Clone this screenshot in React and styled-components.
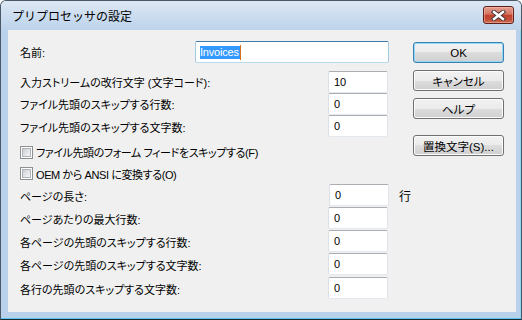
import React from "react";
import styled, { createGlobalStyle } from "styled-components";

const Global = createGlobalStyle`
  html, body {
    margin: 0;
    padding: 0;
    background: #ffffff;
  }
  body {
    font-family: "Liberation Sans", "Noto Sans CJK JP", sans-serif;
    font-size: 12px;
    color: #000;
  }
`;

const Window = styled.div`
  width: 522px;
  height: 320px;
  box-sizing: border-box;
  border: 1px solid #4b5866;
  border-bottom-color: #1e2a33;
  border-radius: 6px 6px 0 0;
  background: #b9d1ea;
  box-shadow: inset 0 -1px 0 #58c6ea, inset -1px 0 0 #8fd3ee;
  display: flex;
  flex-direction: column;
  overflow: hidden;
`;

const TitleBar = styled.div`
  height: 29px;
  flex: none;
  display: flex;
  align-items: center;
  justify-content: space-between;
  padding: 0 7px 0 11px;
  background: linear-gradient(#dde8f4, #c6d9ee 70%, #bcd3eb);
`;

const Title = styled.div`
  font-family: "Noto Sans CJK JP", sans-serif;
  font-size: 12px;
  color: #000;
  margin-top: -1px;
`;

const CloseButton = styled.div`
  width: 31px;
  height: 18px;
  box-sizing: border-box;
  border: 1px solid #5e2119;
  border-radius: 3px;
  margin-top: -1px;
  background: linear-gradient(#e4a192 0%, #d67361 45%, #c0412a 52%, #c4503a 80%, #cf705b 100%);
  box-shadow: inset 0 0 0 1px rgba(255, 200, 190, 0.45);
  display: flex;
  align-items: center;
  justify-content: center;
`;

const Frame = styled.div`
  flex: 1;
  display: flex;
  padding: 0 5px 7px 7px;
`;

const Client = styled.div`
  flex: 1;
  background: #f0f0f0;
  display: flex;
  padding: 11px 12px 0 12px;
`;

const Form = styled.div`
  width: 369px;
  display: flex;
  flex-direction: column;
`;

const Group = styled.div`
  display: flex;
  flex-direction: column;
  margin-top: ${({ top }) => top || 0}px;
`;

const Row = styled.div`
  height: ${({ h }) => h || 22}px;
  display: flex;
  align-items: ${({ top }) => (top ? "flex-start" : "center")};
`;

const Label = styled.div`
  flex: 1;
  font-family: "Liberation Sans", "Noto Sans CJK JP", sans-serif;
  font-feature-settings: "palt";
  font-size: 11px;
  white-space: nowrap;
  align-self: center;
`;

const TextBox = styled.div`
  width: ${({ w }) => w}px;
  height: 22px;
  box-sizing: border-box;
  background: #fff;
  border: 1px solid;
  border-color: ${({ focused }) =>
    focused ? "#3d7bad #a4c9e3 #b7d9ed #a4c9e3" : "#abadb3 #e2e3ea #e3e9ef #dbdfe6"};
  border-radius: 2px;
  margin-right: ${({ mr }) => mr || 0}px;
  padding-left: ${({ pl }) => pl || 5}px;
  display: flex;
  align-items: center;
  font-family: "Liberation Sans", sans-serif;
  font-size: 11px;
  letter-spacing: -0.2px;
  flex: none;
`;

const Selected = styled.span`
  background: #3399ff;
  color: #fff;
  line-height: 13px;
  padding: 0 1px 0 0;
`;

const Caret = styled.span`
  width: 1px;
  height: 15px;
  background: #d9701e;
`;

const Unit = styled.div`
  width: 0;
  text-indent: 10px;
  white-space: nowrap;
  font-family: "Noto Sans CJK JP", sans-serif;
  font-size: 12px;
  align-self: center;
`;

const CheckLabel = styled.label`
  display: flex;
  align-items: center;
  gap: 3px;
  font-family: "Liberation Sans", "Noto Sans CJK JP", sans-serif;
  font-feature-settings: "palt";
  font-size: 11px;
  letter-spacing: -0.4px;
  white-space: nowrap;
`;

const Box = styled.span`
  width: 13px;
  height: 13px;
  box-sizing: border-box;
  border: 1px solid #8e8f8f;
  background: #fff;
  padding: 1px;
  display: flex;
  flex: none;
  &::after {
    content: "";
    flex: 1;
    border: 1px solid #aeb3b9;
    background: linear-gradient(135deg, #cbcfd5, #f6f6f6);
  }
`;

const Buttons = styled.div`
  width: 91px;
  margin-left: auto;
  display: flex;
  flex-direction: column;
  padding-top: 1px;
`;

const Button = styled.div`
  height: 21px;
  box-sizing: border-box;
  margin-top: ${({ top }) => top || 0}px;
  border: 1px solid ${({ primary }) => (primary ? "#3c7fb1" : "#707070")};
  border-radius: 3px;
  background: linear-gradient(#f2f2f2 0%, #ebebeb 50%, #dddddd 50%, #cfcfcf 100%);
  box-shadow: inset 0 0 0 1px ${({ primary }) => (primary ? "#8fd8f5" : "#fcfcfc")};
  display: flex;
  align-items: center;
  justify-content: center;
  font-family: "Liberation Sans", "Noto Sans CJK JP", sans-serif;
  font-feature-settings: "palt";
  font-size: 11.5px;
  white-space: nowrap;
`;

const topFields = [
  ["入力ストリームの改行文字 (文字コード):", "10"],
  ["ファイル先頭のスキップする行数:", "0"],
  ["ファイル先頭のスキップする文字数:", "0"],
];

const pageFields = [
  ["ページの長さ:", "0", "行"],
  ["ページあたりの最大行数:", "0"],
  ["各ページの先頭のスキップする行数:", "0"],
  ["各ページの先頭のスキップする文字数:", "0"],
  ["各行の先頭のスキップする文字数:", "0"],
];

const CloseIcon = () => (
  <svg width="15" height="11" viewBox="0 0 15 11">
    <path d="M3 2 L12 9 M12 2 L3 9" stroke="#4a3a38" strokeWidth="4.4" strokeLinecap="square" />
    <path d="M3 2 L12 9 M12 2 L3 9" stroke="#ffffff" strokeWidth="2.4" strokeLinecap="square" />
  </svg>
);

export default function App() {
  return (
    <>
      <Global />
      <Window>
        <TitleBar>
          <Title>プリプロセッサの設定</Title>
          <CloseButton>
            <CloseIcon />
          </CloseButton>
        </TitleBar>
        <Frame>
          <Client>
            <Form>
              <Row>
                <Label>名前:</Label>
                <TextBox w={194} focused pl={4}>
                  <Selected>Invoices</Selected>
                  <Caret />
                </TextBox>
              </Row>
              <Group top={8}>
                {topFields.map(([label, value], i) => (
                  <Row key={i} h={i === 2 ? 23 : 22} top>
                    <Label>{label}</Label>
                    <TextBox w={60} mr={1}>{value}</TextBox>
                  </Row>
                ))}
              </Group>
              <Group top={3}>
                <Row h={22}>
                  <CheckLabel>
                    <Box />
                    ファイル先頭のフォーム フィードをスキップする(F)
                  </CheckLabel>
                </Row>
                <Row h={21}>
                  <CheckLabel>
                    <Box />
                    OEM から ANSI に変換する(O)
                  </CheckLabel>
                </Row>
              </Group>
              <Group>
                {pageFields.map(([label, value, unit], i) => (
                  <Row key={i} h={i === 3 ? 24 : 23} top>
                    <Label>{label}</Label>
                    <TextBox w={60} mr={unit ? 0 : 1}>{value}</TextBox>
                    {unit && <Unit>{unit}</Unit>}
                  </Row>
                ))}
              </Group>
            </Form>
            <Buttons>
              <Button primary>OK</Button>
              <Button top={7}>キャンセル</Button>
              <Button top={7}>ヘルプ</Button>
              <Button top={16}>置換文字(S)...</Button>
            </Buttons>
          </Client>
        </Frame>
      </Window>
    </>
  );
}
